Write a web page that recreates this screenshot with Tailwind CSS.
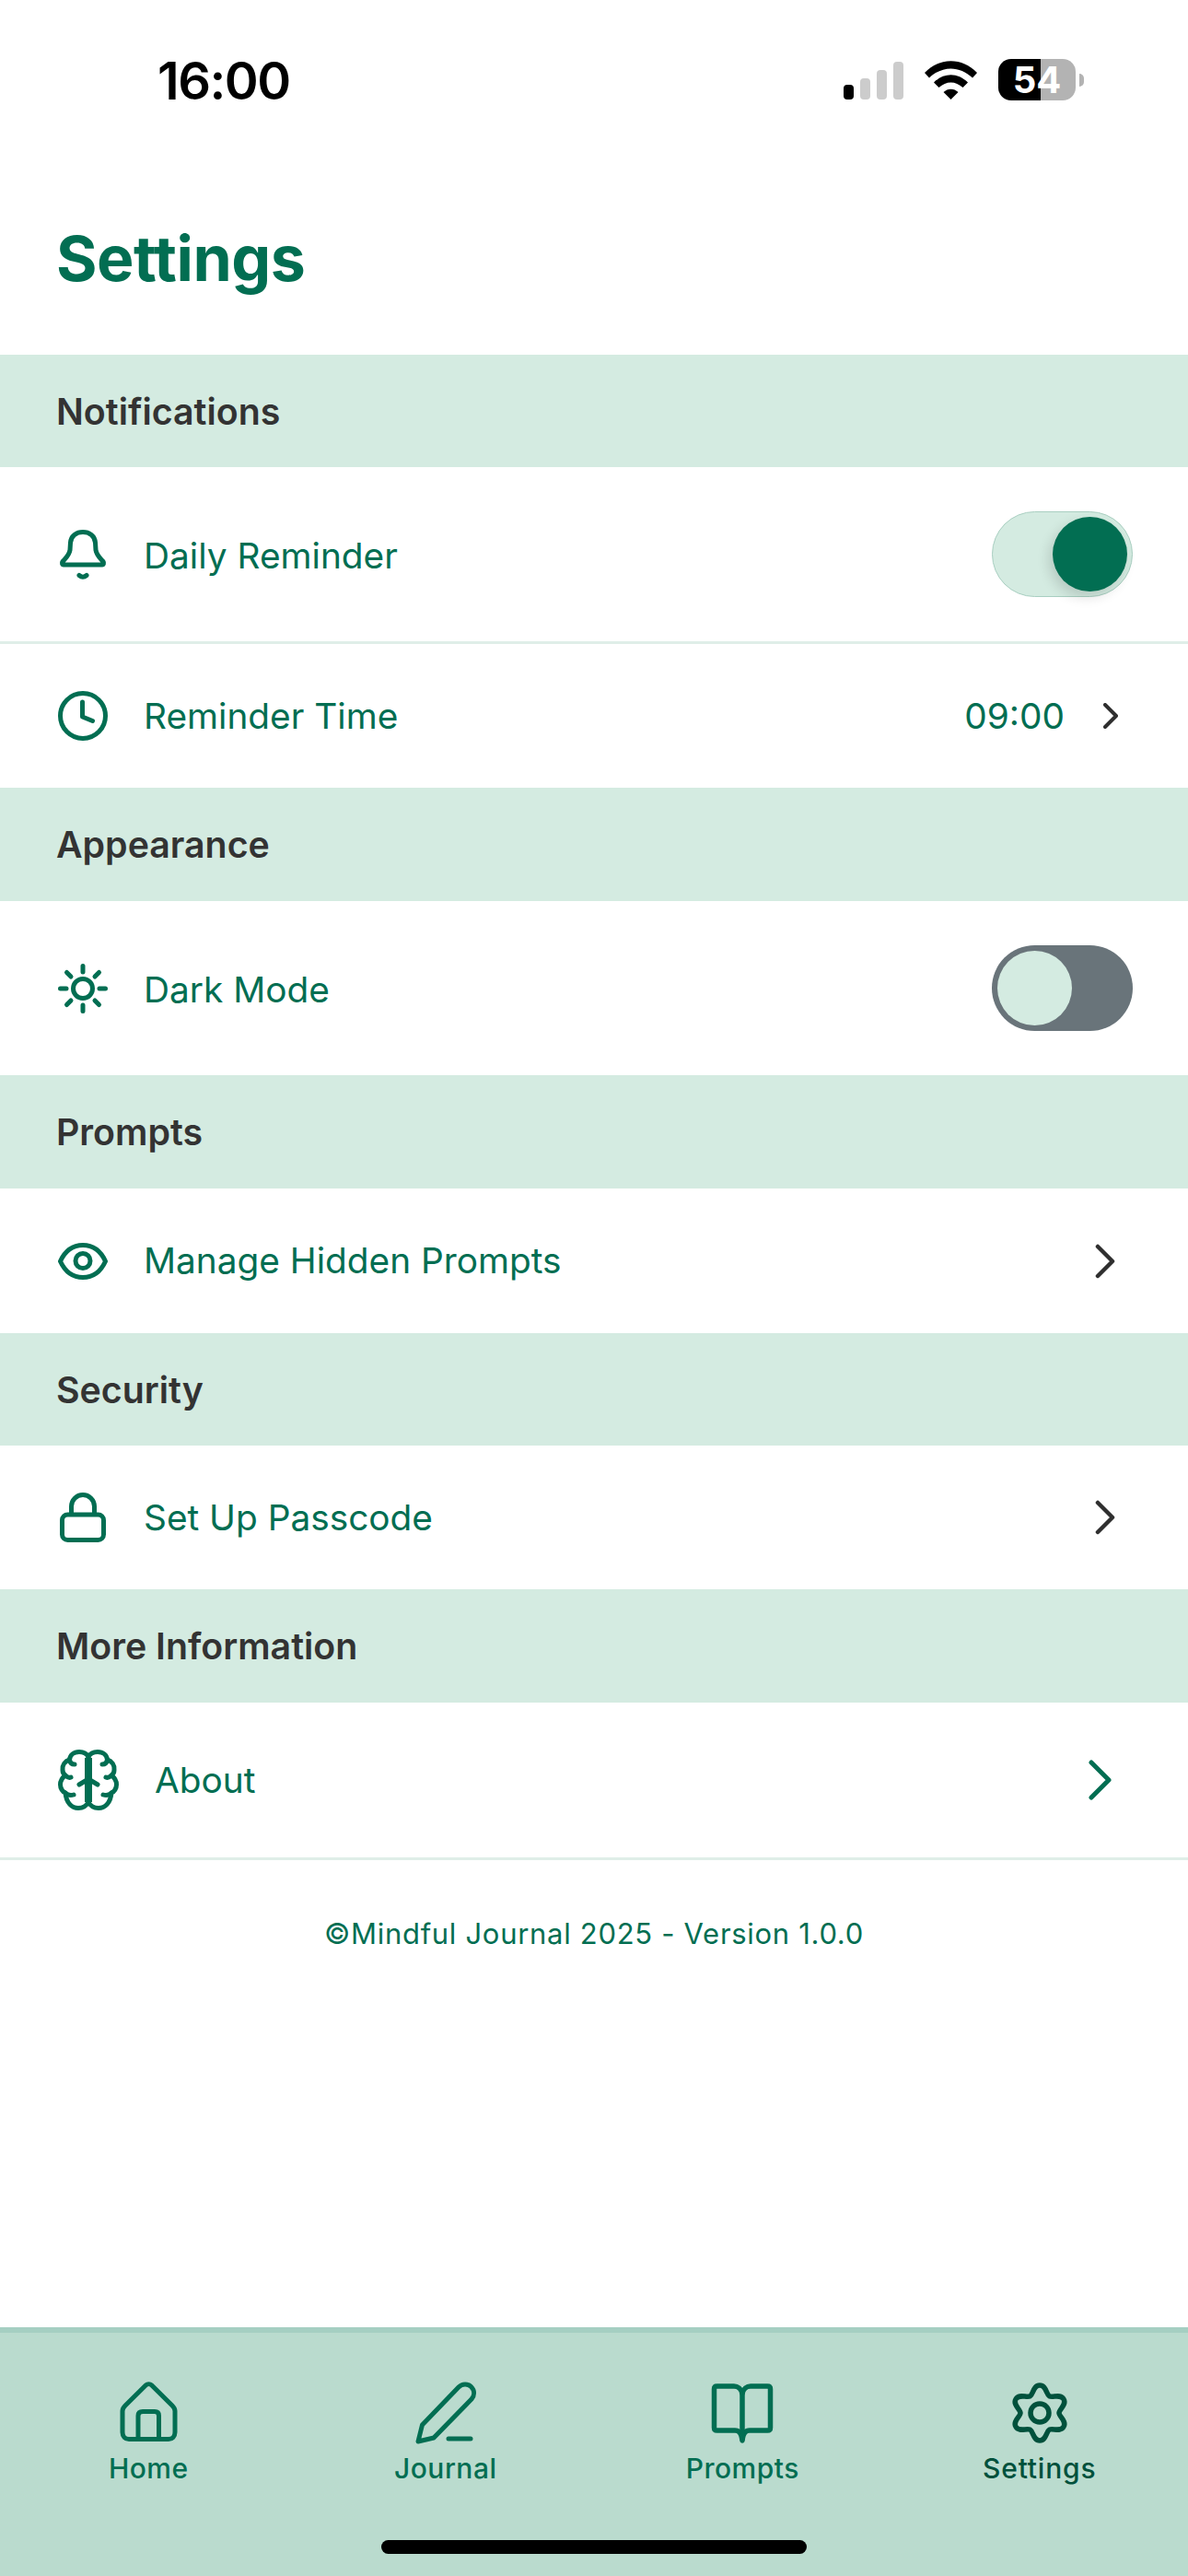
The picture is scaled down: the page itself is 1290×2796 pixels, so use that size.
<!DOCTYPE html>
<html>
<head>
  <title>Settings</title>
  <script src="https://cdn.jsdelivr.net/npm/@tailwindcss/browser@4"></script>
</head>
<body class="h-[2796px] w-[1290px] flex flex-col bg-white overflow-hidden font-['Inter',sans-serif] text-[#026e52]">

  <!-- status bar -->
  <div class="h-[176px] shrink-0 flex items-start justify-between pt-[64px] pl-[171px] pr-[113px]">
    <span class="text-[56px] leading-[48px] font-semibold text-black tracking-[-1.5px]">16:00</span>
    <div class="flex items-center">
      <div class="flex items-end gap-[7px] h-[41px] mt-[2px]">
        <div class="w-[11px] h-[16px] rounded-[4px] bg-black"></div>
        <div class="w-[11px] h-[23px] rounded-[4px] bg-[#cccccc]"></div>
        <div class="w-[11px] h-[32px] rounded-[4px] bg-[#cccccc]"></div>
        <div class="w-[11px] h-[41px] rounded-[4px] bg-[#cccccc]"></div>
      </div>
      <svg class="ml-[23px] mr-[23px]" width="57" height="42" viewBox="0 0 57 42">
        <path fill="black" d="M0 13 C16 -4 41 -4 57 13 L52 18.500 C38 5 19 5 5 18.500 Z"/>
        <path fill="black" d="M10 23.500 C21 12.500 36 12.500 47 23.500 L41.500 29 C33.500 21.500 23.500 21.500 15.500 29 Z"/>
        <path fill="black" d="M20.500 34 C25 29.500 32 29.500 36.500 34 L28.500 42 Z"/>
      </svg>
      <div class="relative w-[84px] h-[45px] flex">
        <div class="w-[46px] h-full rounded-l-[14px] bg-black"></div>
        <div class="w-[38px] h-full rounded-r-[14px] bg-[#b3b3b3]"></div>
        <span class="absolute inset-0 flex items-center justify-center text-[40px] leading-[45px] font-bold text-white">54</span>
      </div>
      <div class="ml-[4px] w-[5px] h-[14px] rounded-r-full bg-[#b3b3b3]"></div>
    </div>
  </div>

  <!-- title -->
  <div class="h-[209px] shrink-0 pl-[61px] pt-[66px]">
    <h1 class="text-[68px] leading-[76px] font-bold tracking-[-0.5px]">Settings</h1>
  </div>

  <!-- sections -->
  <div class="flex h-[122px] shrink-0 items-center bg-[#d4ebe1] pl-[61px] pt-[2px] text-[39.3px] font-semibold text-[#333333]">Notifications</div>

  <div class="flex h-[192px] shrink-0 items-center border-b-[3px] border-[#dfeee8] pl-[63px] pr-[60px]">
    <svg class="mr-[39px]" width="54" height="54" viewBox="0 0 54 54" fill="none" stroke="#026e52" stroke-width="5" stroke-linecap="round" stroke-linejoin="round">
      <path d="M6 38 C4.500 38 4 36 5 34.500 C8 31 12 28 13 22 L13.500 14 C14 6.500 20 2.500 27 2.500 C34 2.500 40 6.500 40.500 14 L41 22 C42 28 46 31 49 34.500 C50 36 49.500 38 48 38 Z"/>
      <path d="M23 49.500 Q27 53 31 49.500"/>
    </svg>
    <span class="mt-[3px] text-[38.8px]">Daily Reminder</span>
    <div class="ml-auto relative w-[153px] h-[93px] rounded-full bg-[#d4ebe1] border border-[#a9cfc1]">
      <div class="absolute right-[5px] top-[5px] w-[81px] h-[81px] rounded-full bg-[#026e52] shadow-[-4px_6px_14px_rgba(0,0,0,0.14)]"></div>
    </div>
  </div>

  <div class="flex h-[156px] shrink-0 items-center pl-[63px] pr-[76px]">
    <svg class="mr-[39px]" width="54" height="54" viewBox="0 0 54 54" fill="none" stroke="#026e52" stroke-width="5" stroke-linecap="round" stroke-linejoin="round">
      <circle cx="27" cy="27" r="24.500"/>
      <path d="M26.500 12 V28 L37.500 32.500"/>
    </svg>
    <span class="text-[38.8px]">Reminder Time</span>
    <span class="ml-auto text-[38.8px]">09:00</span>
    <svg class="ml-[42px]" width="16" height="28" viewBox="0 0 16 28" fill="none" stroke="#2f2f2f" stroke-width="4" stroke-linecap="round" stroke-linejoin="round">
      <path d="M2 2 L14 14 L2 26"/>
    </svg>
  </div>

  <div class="flex h-[123px] shrink-0 items-center bg-[#d4ebe1] pl-[61px] pt-[2px] text-[39.3px] font-semibold text-[#333333]">Appearance</div>

  <div class="flex h-[189px] shrink-0 items-center pl-[63px] pr-[60px]">
    <svg class="mr-[39px]" width="54" height="54" viewBox="0 0 54 54" fill="none" stroke="#026e52" stroke-width="5" stroke-linecap="round">
      <circle cx="27" cy="27" r="10.500"/>
      <path d="M27 2.500 V9 M27 45 V51.500 M2.500 27 H9 M45 27 H51.500 M9.500 9.500 L14 14 M40 40 L44.500 44.500 M9.500 44.500 L14 40 M40 14 L44.500 9.500"/>
    </svg>
    <span class="mt-[3px] text-[38.8px]">Dark Mode</span>
    <div class="ml-auto relative w-[153px] h-[93px] rounded-full bg-[#69747a]">
      <div class="absolute left-[6px] top-[6px] w-[81px] h-[81px] rounded-full bg-[#d4ebe1]"></div>
    </div>
  </div>

  <div class="flex h-[123px] shrink-0 items-center bg-[#d4ebe1] pl-[61px] pt-[2px] text-[39.3px] font-semibold text-[#333333]">Prompts</div>

  <div class="flex h-[157px] shrink-0 items-center pl-[63px] pr-[78px]">
    <svg class="mr-[39px]" width="54" height="40" viewBox="0 0 54 40" fill="none" stroke="#026e52" stroke-width="5" stroke-linejoin="round">
      <path d="M2.500 20 C8 8 17 2.500 27 2.500 C37 2.500 46 8 51.500 20 C46 32 37 37.500 27 37.500 C17 37.500 8 32 2.500 20 Z"/>
      <circle cx="27" cy="19.500" r="8"/>
    </svg>
    <span class="text-[38.8px]">Manage Hidden Prompts</span>
    <svg class="ml-auto" width="24" height="38" viewBox="0 0 24 38" fill="none" stroke="#2f2f2f" stroke-width="4.500" stroke-linecap="round" stroke-linejoin="round">
      <path d="M4 3 L20 19 L4 35"/>
    </svg>
  </div>

  <div class="flex h-[122px] shrink-0 items-center bg-[#d4ebe1] pl-[61px] pt-[2px] text-[39.3px] font-semibold text-[#333333]">Security</div>

  <div class="flex h-[156px] shrink-0 items-center pl-[63px] pr-[78px]">
    <svg class="mr-[39px]" width="54" height="54" viewBox="0 0 54 54" fill="none" stroke="#026e52" stroke-width="5" stroke-linejoin="round">
      <rect x="4.500" y="24" width="45" height="27.500" rx="6"/>
      <path d="M14.500 24 V15 a12.500 12.500 0 0 1 25 0 V24"/>
    </svg>
    <span class="text-[38.8px]">Set Up Passcode</span>
    <svg class="ml-auto" width="24" height="38" viewBox="0 0 24 38" fill="none" stroke="#2f2f2f" stroke-width="4.500" stroke-linecap="round" stroke-linejoin="round">
      <path d="M4 3 L20 19 L4 35"/>
    </svg>
  </div>

  <div class="flex h-[123px] shrink-0 items-center bg-[#d4ebe1] pl-[61px] pt-[2px] text-[39.3px] font-semibold text-[#333333]">More Information</div>

  <div class="flex h-[171px] shrink-0 items-center border-b-[3px] border-[#dfeee8] pl-[63px] pr-[82px]">
    <svg class="mr-[39px]" width="66" height="66" viewBox="0 0 66 66" fill="none" stroke="#026e52" stroke-width="5" stroke-linecap="round" stroke-linejoin="round">
      <path d="M33 8 C31 4 27 2.500 23 2.500 C17 2.500 13 6 12.500 11 C7.500 12.500 4.500 17 5 22 C5 25 6.500 27 8 28 C4 31 2.500 34 2.500 38 C2.500 42 5 46 8 47 C9 58 15 63.500 22 63.500 C27 63.500 31 61 33 57 Z"/>
      <path d="M33 8 C35 4 39 2.500 43 2.500 C49 2.500 53 6 53.500 11 C58.500 12.500 61.500 17 61 22 C61 25 59.500 27 58 28 C62 31 63.500 34 63.500 38 C63.500 42 61 46 58 47 C57 58 51 63.500 44 63.500 C39 63.500 35 61 33 57 Z"/>
      <path stroke-width="8" stroke-linecap="butt" d="M33 9 V57"/>
      <path d="M33 32 L23 38 M33 32 L43 38 M12.500 11 C13 14 15 16 18 16 M53.500 11 C53 14 51 16 48 16 M8 47 C11 50 14 50 17 49 M58 47 C55 50 52 50 49 49 M8 28 C10 30 12 31 14 30 M58 28 C56 30 54 31 52 30"/>
    </svg>
    <span class="text-[38.8px]">About</span>
    <svg class="ml-auto" width="27" height="44" viewBox="0 0 27 44" fill="none" stroke="#026e52" stroke-width="5" stroke-linecap="round" stroke-linejoin="round">
      <path d="M4 3 L23 22 L4 41"/>
    </svg>
  </div>

  <!-- footer line -->
  <p class="mt-[61px] text-center text-[31px] leading-[38px] tracking-[0.7px]">©Mindful Journal 2025 - Version 1.0.0</p>

  <!-- tab bar -->
  <nav class="relative mt-auto h-[270px] shrink-0 grid grid-cols-4 bg-[#badbce] border-t-[6px] border-[#a5cfc2]">
    <div class="flex flex-col items-center pt-[53px]">
      <svg width="66" height="68" viewBox="0 0 66 68" fill="none" stroke="#026e52" stroke-width="5" stroke-linejoin="round">
        <path d="M30.500 3.800 C32 2.300 35 2.300 36.500 3.800 L59 26 C60.500 27.500 62 29.500 62 32 V55 C62 59.500 59 62.500 55 62.500 H12 C8 62.500 5 59.500 5 55 V32 C5 29.500 6.500 27.500 8 26 Z"/>
        <path d="M22 62 V37 C22 34 24 32.500 27 32.500 H40 C43 32.500 44.500 34 44.500 37 V62"/>
      </svg>
      <span class="mt-[8px] text-[30px] leading-[36px] font-medium tracking-[0.5px]">Home</span>
    </div>
    <div class="flex flex-col items-center pt-[53px]">
      <svg width="70" height="68" viewBox="0 0 70 68" fill="none" stroke="#026e52" stroke-width="5" stroke-linecap="round" stroke-linejoin="round">
        <path d="M5 65 L9.500 47 L49 6 C53 2 59 2 62.500 5.500 C66.500 9.500 66.500 15 63 19 L22 61 Z"/>
        <path d="M38 62 H62"/>
      </svg>
      <span class="mt-[8px] text-[30px] leading-[36px] font-medium tracking-[0.5px]">Journal</span>
    </div>
    <div class="flex flex-col items-center pt-[53px]">
      <svg width="68" height="68" viewBox="0 0 68 68" fill="none" stroke="#026e52" stroke-width="5.500" stroke-linecap="round" stroke-linejoin="round">
        <path d="M34 13 C33 8 29 5 25 5 H6.500 C4.500 5 3.500 6 3.500 8 V50 C3.500 52 4.500 53 6.500 53 H26 C30 53 33 55 34 64 C35 55 38 53 42 53 H61.500 C63.500 53 64.500 52 64.500 50 V8 C64.500 6 63.500 5 61.500 5 H43 C39 5 35 8 34 13 Z"/>
        <path d="M34 13 V62"/>
      </svg>
      <span class="mt-[8px] text-[30px] leading-[36px] font-medium tracking-[0.5px]">Prompts</span>
    </div>
    <div class="flex flex-col items-center pt-[53px] text-[#00513c]">
      <svg width="62" height="68" viewBox="0 0 62 68" fill="none" stroke="#00513c" stroke-width="5.500" stroke-linejoin="round">
        <path d="M31 4 C38 4 38 13.800 41.500 15.800 C45 17.800 53.500 12.900 57 19 C60.500 25.100 52 30 52 34 C52 38 60.500 42.900 57 49 C53.500 55.100 45 50.200 41.500 52.200 C38 54.200 38 64 31 64 C24 64 24 54.200 20.500 52.200 C17 50.200 8.500 55.100 5 49 C1.500 42.900 10 38 10 34 C10 30 1.500 25.100 5 19 C8.500 12.900 17 17.800 20.500 15.800 C24 13.800 24 4 31 4 Z"/>
        <circle cx="31" cy="34" r="10"/>
      </svg>
      <span class="mt-[8px] text-[30px] leading-[36px] font-medium tracking-[0.8px]">Settings</span>
    </div>
    <div class="absolute left-[414px] top-[225px] w-[462px] h-[15px] rounded-full bg-black"></div>
  </nav>
</body>
</html>
